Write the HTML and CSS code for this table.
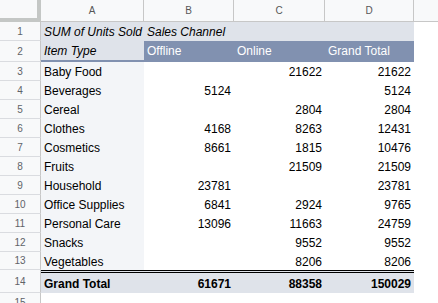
FILE: index.html
```html
<!DOCTYPE html>
<html lang="en">
<head>
  <meta charset="UTF-8" />
  <title>Pivot Table - Units Sold</title>
  <link rel="stylesheet" href="styles.css">
</head>
<body>
  <div class="sheet">
    <div class="row head-row">
      <div class="corner"></div>
      <div class="col-head">A</div>
      <div class="col-head">B</div>
      <div class="col-head">C</div>
      <div class="col-head">D</div>
      <div class="col-head blank"></div>
    </div>

    <div class="row">
      <div class="num">1</div>
      <div class="cell band italic">SUM of Units Sold</div>
      <div class="cell band italic">Sales Channel</div>
      <div class="cell band"></div>
      <div class="cell band"></div>
      <div class="cell"></div>
    </div>

    <div class="row row-labels">
      <div class="num">2</div>
      <div class="cell band italic">Item Type</div>
      <div class="cell dark">Offline</div>
      <div class="cell dark">Online</div>
      <div class="cell dark">Grand Total</div>
      <div class="cell"></div>
    </div>

    <div id="body"></div>

    <div class="row row-total">
      <div class="num">14</div>
      <div class="cell band bold">Grand Total</div>
      <div class="cell band bold right">61671</div>
      <div class="cell band bold right">88358</div>
      <div class="cell band bold right">150029</div>
      <div class="cell"></div>
    </div>

    <div class="row">
      <div class="num">15</div>
      <div class="cell"></div>
      <div class="cell"></div>
      <div class="cell"></div>
      <div class="cell"></div>
      <div class="cell"></div>
    </div>
  </div>

  <script>
    const items = [
      ['Baby Food', '', '21622', '21622'],
      ['Beverages', '5124', '', '5124'],
      ['Cereal', '', '2804', '2804'],
      ['Clothes', '4168', '8263', '12431'],
      ['Cosmetics', '8661', '1815', '10476'],
      ['Fruits', '', '21509', '21509'],
      ['Household', '23781', '', '23781'],
      ['Office Supplies', '6841', '2924', '9765'],
      ['Personal Care', '13096', '11663', '24759'],
      ['Snacks', '', '9552', '9552'],
      ['Vegetables', '', '8206', '8206']
    ];
    const body = document.getElementById('body');
    items.forEach((item, idx) => {
      const row = document.createElement('div');
      row.className = 'row' + (idx === items.length - 1 ? ' row-last' : '');
      row.innerHTML = `
        <div class="num">${idx + 3}</div>
        <div class="cell label">${item[0]}</div>
        <div class="cell right">${item[1]}</div>
        <div class="cell right">${item[2]}</div>
        <div class="cell right">${item[3]}</div>
        <div class="cell"></div>
      `;
      body.appendChild(row);
    });
  </script>
</body>
</html>
```

FILE: styles.css
```css
:root {
  --cols: 41px 103px 90px 91px 89px 1fr;
  --band: #dfe3ea;
  --dark: #8191b0;
  --label: #f3f5f8;
  --head-bg: #f8f9fa;
  --head-line: #c7c7c7;
  --num-line: #dadce0;
}
body {
  margin: 0;
  background: #fff;
  font-family: 'Liberation Sans', Arial, sans-serif;
  color: #000;
  overflow: hidden;
}
.sheet {
  width: 438px;
}
.row {
  display: grid;
  grid-template-columns: var(--cols);
  height: 19px;
}
.head-row {
  height: 22px;
}
.corner {
  background: var(--head-bg);
  border-right: 4px solid #c4c7c5;
  border-bottom: 4px solid #c4c7c5;
  box-sizing: border-box;
}
.col-head {
  background: var(--head-bg);
  border-right: 1px solid var(--head-line);
  border-bottom: 1px solid var(--head-line);
  display: flex;
  align-items: center;
  justify-content: center;
  font-size: 10px;
  color: #575757;
}
.col-head.blank {
  border-right: none;
}
.num {
  background: var(--head-bg);
  border-right: 1px solid var(--head-line);
  border-bottom: 1px solid var(--num-line);
  display: flex;
  align-items: center;
  justify-content: center;
  font-size: 10px;
  color: #5f6368;
}
.cell {
  display: flex;
  align-items: center;
  padding: 1px 3px 0 3px;
  font-size: 12px;
  white-space: nowrap;
  overflow: visible;
}
.right {
  justify-content: flex-end;
}
.italic {
  font-style: italic;
}
.bold {
  font-weight: bold;
}
.band {
  background: var(--band);
}
.label {
  background: var(--label);
}
.dark {
  background: var(--dark);
  color: #fff;
}
.row-labels {
  height: 21px;
}
.row-labels .cell {
  border-bottom: 2px solid var(--dark);
}
.row-labels .cell:last-child {
  border-bottom: none;
}
.row-last {
  height: 18px;
}
.row-total {
  height: 23px;
}
.row-total .cell {
  border-top: 3px double #000;
}
.row-total .cell:last-child {
  border-top: none;
}
```
